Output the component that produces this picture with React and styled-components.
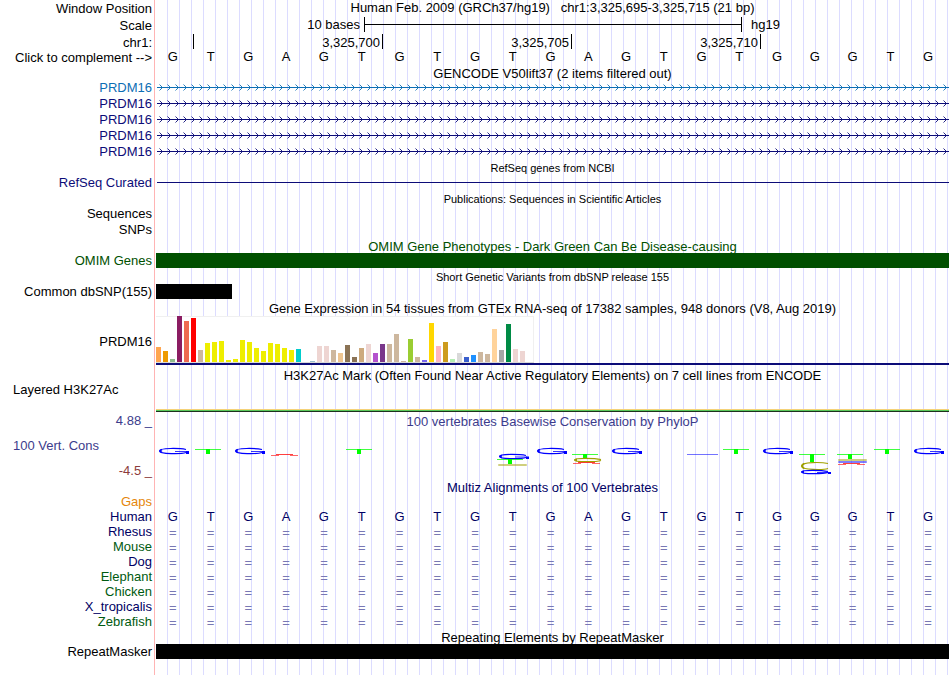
import styled, { createGlobalStyle } from "styled-components"

const bases = "GTGAGTGTGTGAGTGTGGGTG".split("")

const species = [
    { name: "Rhesus", color: "#000064" },
    { name: "Mouse", color: "#005a10" },
    { name: "Dog", color: "#000064" },
    { name: "Elephant", color: "#005a10" },
    { name: "Chicken", color: "#005a10" },
    { name: "X_tropicalis", color: "#000064" },
    { name: "Zebrafish", color: "#005a10" },
]

const transcripts = ["#0c6eb4", "#0c0c78", "#0c0c78", "#0c0c78", "#0c0c78"]

// one bar per tissue: colour, height
const tissues = [
    ["#ffa54f", 15], ["#ee9a00", 11], ["#8fbc8f", 3], ["#8b1c62", 46], ["#ee6a50", 41], ["#ff0000", 44],
    ["#cdb79e", 12], ["#eeee00", 19], ["#eeee00", 20], ["#eeee00", 21], ["#eeee00", 2], ["#eeee00", 3],
    ["#eeee00", 22], ["#eeee00", 20], ["#eeee00", 14], ["#eeee00", 11], ["#eeee00", 19], ["#eeee00", 18],
    ["#eeee00", 14], ["#eeee00", 12], ["#00cdcd", 13], ["#ee82ee", 0], ["#9ac0cd", 1], ["#eed5d2", 16],
    ["#eed5d2", 16], ["#cdb79e", 12], ["#eec591", 9], ["#8b7355", 17], ["#8b7355", 5], ["#cdaa7d", 14],
    ["#eed5d2", 18], ["#b452cd", 9], ["#7a378b", 18], ["#cdb79e", 18], ["#cdb79e", 28], ["#cdb79e", 1],
    ["#9acd32", 23], ["#cdb79e", 5], ["#7a67ee", 2], ["#ffd700", 39], ["#ffb6c1", 16], ["#cd9b1d", 20],
    ["#b4eeb4", 3], ["#d9d9d9", 9], ["#3a5fcd", 5], ["#1e90ff", 7], ["#cdb79e", 10], ["#cdb79e", 8],
    ["#ffd39b", 33], ["#a6a6a6", 12], ["#008b45", 38], ["#eed5d2", 13], ["#eed5d2", 11], ["#ff00ff", 0],
]

// conservation marks: column, kind, top, height
const marks = [
    [0, "G", 18, 6], [1, "T", 19, 5], [2, "G", 18, 6], [3, "A", 24, 2], [5, "T", 19, 5],
    [9, "G", 24, 5], [9, "T", 29, 5], [9, "C", 34, 2],
    [10, "G", 18, 6],
    [11, "T", 24, 4], [11, "C", 28, 4], [11, "A", 32, 2],
    [12, "G", 18, 6], [14, "line", 24, 1], [15, "T", 19, 5], [16, "G", 18, 6],
    [17, "T", 24, 8], [17, "C", 32, 8], [17, "G", 40, 4],
    [18, "T", 24, 5], [18, "C", 29, 2], [18, "G", 31, 2], [18, "A", 33, 2],
    [19, "T", 19, 5], [20, "G", 18, 6],
]

const Mark = ({ col, kind, top, h }) => {

    const x = Math.round(col * 37.76) + 2

    if (kind === "T") {
        return (
            <g fill="#00ff00">
                <rect x={x - 1} y={top} width="26" height="1" opacity="0.75" />
                <rect x={x + 10} y={top} width="4" height={h} />
            </g>
        )
    }

    if (kind === "line") {
        return <rect x={x} y={top} width="31" height="1" fill="#0000ff" opacity="0.55" />
    }

    if (kind === "A") {
        return (
            <g fill="#ff0000">
                <rect x={x + 5} y={top} width="17" height="1" opacity="0.75" />
                <rect x={x} y={top + 1} width="8" height="1" opacity="0.6" />
                <rect x={x + 19} y={top + 1} width="8" height="1" opacity="0.6" />
            </g>
        )
    }

    const color = kind === "G" ? "#0000ff" : "#a0a000"
    const bottom = top + h
    const mid = top + h / 2

    if (h <= 2) {
        return <rect x={x} y={top} width="29" height={h} rx="1" fill={color} opacity="0.5" />
    }

    return (
        <g fill="none" stroke={color}>
            <path d={`M${x + 28} ${top + 1.5} C${x + 22} ${top + 0.2} ${x + 1.5} ${top - 0.4} ${x + 1.5} ${mid} C${x + 1.5} ${bottom + 0.4} ${x + 24} ${bottom} ${x + 28} ${bottom - 1.5}`} strokeWidth="1.2" />
            <path d={`M${x + 4} ${top + 1.5} Q${x + 0.5} ${mid} ${x + 4} ${bottom - 1.5}`} strokeWidth="1.8" />
            {kind === "G" && <path d={`M${x + 17} ${mid + 0.5} H${x + 29}`} strokeWidth="0.8" />}
            {kind === "G" && <path d={`M${x + 29.5} ${mid} V${bottom}`} strokeWidth="3" />}
        </g>
    )

}

const Arrows = ({ id, color }) => {

    return (
        <ArrowLine aria-hidden="true">
            <defs>
                <pattern id={id} x="0" y="0" width="8" height="16" patternUnits="userSpaceOnUse">
                    <path d="M3.5 4.5 L6.5 7.5 L3.5 10.5" fill="none" stroke={color} strokeWidth="0.9" />
                </pattern>
            </defs>
            <rect x="1" y="7" width="100%" height="1" fill={color} />
            <rect x="1" y="0" width="100%" height="16" fill={`url(#${id})`} />
        </ArrowLine>
    )

}

const TitleRow = ({ children, ...rest }) => {

    return (
        <Row>
            <Label />
            <Title {...rest}>{children}</Title>
        </Row>
    )

}

const App = () => {

    return (

        <>
            <GlobalStyle />
            <Browser>

                <Row>
                    <Label $top={1}>Window Position</Label>
                    <Title $height={17}>{"Human Feb. 2009 (GRCh37/hg19)   chr1:3,325,695-3,325,715 (21 bp)"}</Title>
                </Row>

                <Row>
                    <Label $top={1}>Scale</Label>
                    <ScaleTrack>
                        <ScaleText $right>10 bases</ScaleText>
                        <Bracket><BracketLine /></Bracket>
                        <ScaleText>hg19</ScaleText>
                    </ScaleTrack>
                </Row>

                <Row>
                    <Label $top={1} $height={15}>chr1:</Label>
                    <Ruler>
                        <Tick />
                        <Tick>3,325,700</Tick>
                        <Tick>3,325,705</Tick>
                        <Tick>3,325,710</Tick>
                    </Ruler>
                </Row>

                <Row>
                    <Label $top={1} $height={17}><Complement type="button">Click to complement --&gt;</Complement></Label>
                    <Sequence>
                        {bases.map((base, i) => <Base key={i}>{base}</Base>)}
                    </Sequence>
                </Row>

                <TitleRow $height={14}>GENCODE V50lift37 (2 items filtered out)</TitleRow>
                {transcripts.map((color, i) => (
                    <Row key={i}>
                        <Label $color={color}>PRDM16</Label>
                        <Track><Arrows id={`arrows${i}`} color={color} /></Track>
                    </Row>
                ))}

                <TitleRow $small>RefSeq genes from NCBI</TitleRow>
                <Row>
                    <Label $color="#0c0c78">RefSeq Curated</Label>
                    <Track><GeneLine /></Track>
                </Row>

                <TitleRow $small>Publications: Sequences in Scientific Articles</TitleRow>
                <Row>
                    <Label>Sequences</Label>
                    <Track />
                </Row>
                <Row>
                    <Label>SNPs</Label>
                    <Track />
                </Row>

                <TitleRow $top={1} $color="#005000">OMIM Gene Phenotypes - Dark Green Can Be Disease-causing</TitleRow>
                <Row>
                    <Label $color="#005000">OMIM Genes</Label>
                    <Track><Block $color="#005000" /></Track>
                </Row>

                <TitleRow $small>Short Genetic Variants from dbSNP release 155</TitleRow>
                <Row>
                    <Label>Common dbSNP(155)</Label>
                    <Track><Block $width="76px" /></Track>
                </Row>

                <TitleRow $top={1} $height={16}>Gene Expression in 54 tissues from GTEx RNA-seq of 17382 samples, 948 donors (V8, Aug 2019)</TitleRow>
                <Row>
                    <Label $middle>PRDM16</Label>
                    <Track $height={52}>
                        <Expression>
                            {tissues.map(([color, height], i) => (
                                <Bar key={i} style={{ height, background: color }} />
                            ))}
                        </Expression>
                        <GeneModel />
                    </Track>
                </Row>

                <TitleRow $height={14}>H3K27Ac Mark (Often Found Near Active Regulatory Elements) on 7 cell lines from ENCODE</TitleRow>
                <Row>
                    <Label $left>Layered H3K27Ac</Label>
                    <SignalTrack><Signal /></SignalTrack>
                </Row>

                <Row>
                    <ConsLabel>
                        <ConsText $color="#3c3c8c">4.88 _</ConsText>
                        <ConsText $color="#3c3c8c" $left>100 Vert. Cons</ConsText>
                        <ConsText $color="#8c3c3c">-4.5 _</ConsText>
                    </ConsLabel>
                    <ConsTrack>
                        <Title $top={2} $height={18} $color="#3c3c8c">100 vertebrates Basewise Conservation by PhyloP</Title>
                        <Logo viewBox="0 0 793 49" preserveAspectRatio="none" aria-label="PhyloP conservation">
                            {marks.map(([col, kind, top, h], i) => (
                                <Mark key={i} col={col} kind={kind} top={top} h={h} />
                            ))}
                        </Logo>
                    </ConsTrack>
                </Row>

                <TitleRow $top={1} $color="#000064">Multiz Alignments of 100 Vertebrates</TitleRow>
                <Row>
                    <Label $color="#e5860a" $height={15}>Gaps</Label>
                    <Track $height={15} />
                </Row>
                <Row>
                    <Label $color="#000064" $height={15}>Human</Label>
                    <Sequence $height={15} $color="#000064">
                        {bases.map((base, i) => <Base key={i}>{base}</Base>)}
                    </Sequence>
                </Row>
                {species.map(({ name, color }) => (
                    <Row key={name}>
                        <Label $color={color} $height={15}>{name}</Label>
                        <Sequence $height={15} $color="#7878b4">
                            {bases.map((base, i) => <Base key={i} $low>=</Base>)}
                        </Sequence>
                    </Row>
                ))}

                <TitleRow $top={1}>Repeating Elements by RepeatMasker</TitleRow>
                <Row>
                    <Label>RepeatMasker</Label>
                    <Track><Block /></Track>
                </Row>

                <Rest>
                    <Label />
                    <Track />
                </Rest>

            </Browser>
        </>

    )

}

export default App


const GlobalStyle = createGlobalStyle`

                body {
                    margin: 0;
                    background: white;
                }

                * {
                    box-sizing: border-box;
                }
                `

const Browser = styled.main`

                display: flex;
                flex-direction: column;
                min-height: 100vh;
                padding-right: 1px;
                font-family: "Liberation Sans", Arial, sans-serif;
                font-size: 13px;
                line-height: 16px;
                color: black;
                white-space: pre;
                overflow: hidden;
                `

const Row = styled.div`

                display: grid;
                grid-template-columns: 155px minmax(0, 1fr);
                column-gap: 1px;
                `

const Rest = styled(Row)`

                flex: 1;
                `

const Label = styled.div`

                display: flex;
                justify-content: ${({ $left }) => ($left ? "flex-start" : "flex-end")};
                align-items: ${({ $middle }) => ($middle ? "center" : "flex-start")};
                height: ${({ $height }) => ($height ? `${$height}px` : "auto")};
                padding: ${({ $top }) => $top || 0}px 2px 0 13px;
                border-right: 1px solid #ffb4b4;
                color: ${({ $color }) => $color || "black"};
                `

const Complement = styled.button`

                padding: 0;
                border: none;
                background: none;
                color: inherit;
                font: inherit;
                cursor: pointer;
                `

// vertical guide lines every 12px behind each track
const Track = styled.div`

                height: ${({ $height }) => ($height ? `${$height}px` : "auto")};
                min-height: ${({ $height }) => ($height ? 0 : 16)}px;
                background-image: linear-gradient(to right, #dcdcff 1px, transparent 1px);
                background-size: 12px 100%;
                background-position: 11px 0;
                color: ${({ $color }) => $color || "black"};
                `

const Title = styled(Track)`

                height: ${({ $height }) => $height || 15}px;
                min-height: 0;
                padding-top: ${({ $top }) => $top || 0}px;
                font-size: ${({ $small }) => ($small ? 11 : 13)}px;
                text-align: center;
                `

const ScaleTrack = styled(Track)`

                display: grid;
                grid-template-columns: 208fr 378fr 207fr;
                height: 17px;
                `

const ScaleText = styled.span`

                padding: 0 ${({ $right }) => ($right ? 4 : 9)}px;
                text-align: ${({ $right }) => ($right ? "right" : "left")};
                `

const Bracket = styled.div`

                display: flex;
                align-items: center;
                height: 15px;
                border-left: 1px solid black;
                border-right: 1px solid black;
                `

const BracketLine = styled.div`

                flex: 1;
                height: 1px;
                background: black;
                `

const Ruler = styled(Track)`

                display: grid;
                grid-template-columns: 38fr 189fr 189fr 189fr 188fr;
                height: 15px;
                min-height: 0;
                `

const Tick = styled.span`

                height: 15px;
                padding: 1px 2px 0 0;
                border-right: 1px solid black;
                text-align: right;
                `

const Sequence = styled(Track)`

                display: grid;
                grid-template-columns: repeat(21, minmax(0, 1fr));
                `

const Base = styled.span`

                padding: ${({ $low }) => ($low ? 1 : 0)}px 4px 0 0;
                text-align: center;
                `

const ArrowLine = styled.svg`

                display: block;
                width: 100%;
                height: 16px;
                `

const GeneLine = styled.div`

                height: 8px;
                margin-left: 1px;
                border-bottom: 1px solid #0c0c78;
                `

const Block = styled.div`

                width: ${({ $width }) => $width || "100%"};
                height: 15px;
                background: ${({ $color }) => $color || "black"};
                `

const Expression = styled.div`

                display: flex;
                align-items: flex-end;
                gap: 2px;
                width: 378px;
                height: 47px;
                background: white;
                border-bottom: 1px solid #d9d9d9;
                box-shadow: inset -1px 1px #f0f0f0;
                `

const Bar = styled.div`

                width: 5px;
                `

const GeneModel = styled.div`

                height: 2px;
                background: #0c0c78;
                `

const SignalTrack = styled(Track)`

                display: flex;
                align-items: flex-end;
                height: 30px;
                `

const Signal = styled.div`

                flex: 1;
                height: 3px;
                border-top: 1px solid #f5d278;
                border-bottom: 1px solid #1e321e;
                background: #5ac85a;
                `

const ConsLabel = styled(Label)`

                flex-direction: column;
                justify-content: space-between;
                align-items: stretch;
                height: 67px;
                padding-top: 1px;
                `

const ConsText = styled.span`

                color: ${({ $color }) => $color};
                text-align: ${({ $left }) => ($left ? "left" : "right")};
                `

const ConsTrack = styled.div`

                display: flex;
                flex-direction: column;
                height: 67px;
                `

const Logo = styled.svg`

                display: block;
                width: 100%;
                height: 49px;
                background-image: linear-gradient(to right, #dcdcff 1px, transparent 1px);
                background-size: 12px 100%;
                background-position: 11px 0;
                `
